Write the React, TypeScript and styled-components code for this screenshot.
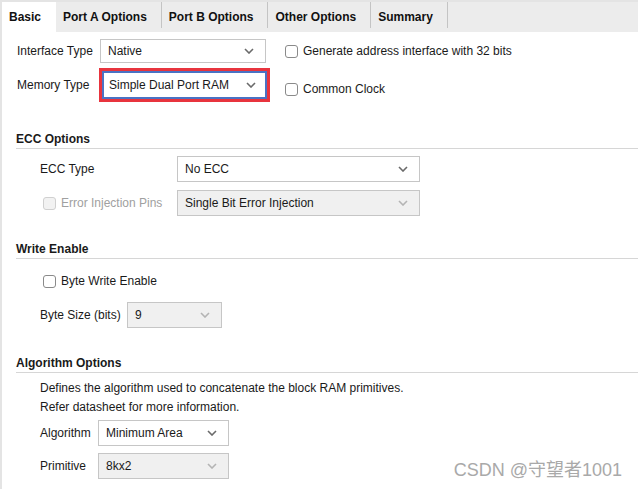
import styled, { createGlobalStyle } from "styled-components";

const GlobalStyle = createGlobalStyle`
  body {
    margin: 0;
    background: #ffffff;
    font-family: "Liberation Sans", Arial, sans-serif;
    font-size: 12px;
    color: #1a1a1a;
  }
`;

const Page = styled.div`
  position: relative;
  width: 638px;
  height: 489px;
  box-sizing: border-box;
  border-left: 2px solid #e4e4e4;
  overflow: hidden;
  background: #ffffff;
`;

const TabBar = styled.div`
  display: flex;
  height: 32px;
  box-sizing: border-box;
  border-top: 2px solid #e4e4e4;
  background: #ececec;
`;

const Tab = styled.div<{ active?: boolean }>`
  position: relative;
  display: flex;
  align-items: center;
  padding: 0 15px 0 7px;
  font-weight: bold;
  font-size: 12px;
  color: #111;
  background: ${(p) => (p.active ? "#ffffff" : "transparent")};

  &::after {
    content: "";
    display: ${(p) => (p.active ? "none" : "block")};
    position: absolute;
    right: 0;
    top: 0;
    bottom: 4px;
    width: 1px;
    background: #c4c4c4;
  }
`;

const Content = styled.div`
  display: flex;
  flex-direction: column;
  padding: 6px 0 0 15px;
`;

const TopGrid = styled.div`
  display: grid;
  grid-template-columns: 83px 185px auto;
  row-gap: 4px;
  align-items: center;
`;

const Label = styled.span<{ disabled?: boolean }>`
  color: ${(p) => (p.disabled ? "#a0a0a0" : "#1a1a1a")};
  white-space: nowrap;
`;

const SelectBox = styled.div<{ width: number; height?: number; disabled?: boolean }>`
  display: flex;
  align-items: center;
  justify-content: space-between;
  box-sizing: border-box;
  width: ${(p) => p.width}px;
  height: ${(p) => p.height ?? 26}px;
  padding: 0 11px 0 7px;
  border: 1px solid #c6c6c6;
  background: ${(p) => (p.disabled ? "#f0f0f0" : "#ffffff")};
  color: #1a1a1a;
`;

const Highlight = styled.div`
  box-sizing: border-box;
  width: 171px;
  height: 34px;
  margin-left: -1px;
  border: 3px solid #e8343e;

  & > div {
    width: 100%;
    height: 100%;
    border: 2px solid #4a72c4;
    padding-left: 5px;
    padding-right: 9px;
  }
`;

const CheckRow = styled.label<{ disabled?: boolean; indent?: number; drop?: number }>`
  display: flex;
  align-items: center;
  gap: 5px;
  height: 26px;
  margin-left: ${(p) => p.indent ?? 0}px;
  margin-top: ${(p) => p.drop ?? 0}px;
  color: ${(p) => (p.disabled ? "#a0a0a0" : "#1a1a1a")};
`;

const Box = styled.span<{ disabled?: boolean }>`
  width: 13px;
  height: 13px;
  box-sizing: border-box;
  border: 1px solid ${(p) => (p.disabled ? "#d0d0d0" : "#8a8a8a")};
  border-radius: 3px;
  background: ${(p) => (p.disabled ? "#f2f2f2" : "#ffffff")};
`;

const Section = styled.div<{ top: number }>`
  display: flex;
  flex-direction: column;
  margin-top: ${(p) => p.top}px;
`;

const SectionTitle = styled.div`
  font-weight: bold;
  line-height: 16px;
  margin-left: -1px;
  padding-bottom: 1px;
  border-bottom: 1px solid #d6d6d6;
`;

const SectionBody = styled.div<{ top: number; gap?: number }>`
  display: flex;
  flex-direction: column;
  gap: ${(p) => p.gap ?? 8}px;
  padding-left: 23px;
  margin-top: ${(p) => p.top}px;
`;

const FieldRow = styled.div<{ labelWidth: number }>`
  display: grid;
  grid-template-columns: ${(p) => p.labelWidth}px auto;
  align-items: center;
  justify-content: start;
`;

const Note = styled.div`
  line-height: 19px;
  margin-bottom: -4px;
`;

const Watermark = styled.div`
  position: absolute;
  right: 16px;
  bottom: 8px;
  font-family: "Liberation Sans", "Noto Sans CJK SC", sans-serif;
  font-size: 18px;
  color: #a9a9a9;
`;

const Chevron = ({ disabled }: { disabled?: boolean }) => (
  <svg width="10" height="6" viewBox="0 0 10 6">
    <polyline
      points="1,1 5,5 9,1"
      fill="none"
      stroke={disabled ? "#b4b4b4" : "#6a6a6a"}
      strokeWidth="1.6"
    />
  </svg>
);

const Select = ({
  value,
  width,
  height,
  disabled,
}: {
  value: string;
  width: number;
  height?: number;
  disabled?: boolean;
}) => (
  <SelectBox width={width} height={height} disabled={disabled}>
    <span>{value}</span>
    <Chevron disabled={disabled} />
  </SelectBox>
);

const Check = ({
  label,
  disabled,
  indent,
  drop,
}: {
  label: string;
  disabled?: boolean;
  indent?: number;
  drop?: number;
}) => (
  <CheckRow disabled={disabled} indent={indent} drop={drop}>
    <Box disabled={disabled} />
    {label}
  </CheckRow>
);

export default function App() {
  return (
    <Page>
      <GlobalStyle />
      <TabBar>
        <Tab active>Basic</Tab>
        <Tab>Port A Options</Tab>
        <Tab>Port B Options</Tab>
        <Tab>Other Options</Tab>
        <Tab>Summary</Tab>
      </TabBar>
      <Content>
        <TopGrid>
          <Label>Interface Type</Label>
          <Select value="Native" width={166} height={24} />
          <Check label="Generate address interface with 32 bits" />
          <Label>Memory Type</Label>
          <Highlight>
            <Select value="Simple Dual Port RAM" width={165} />
          </Highlight>
          <Check label="Common Clock" drop={8} />
        </TopGrid>

        <Section top={29}>
          <SectionTitle>ECC Options</SectionTitle>
          <SectionBody top={7}>
            <FieldRow labelWidth={137}>
              <Label>ECC Type</Label>
              <Select value="No ECC" width={243} />
            </FieldRow>
            <FieldRow labelWidth={137}>
              <Check label="Error Injection Pins" disabled indent={3} />
              <Select value="Single Bit Error Injection" width={243} disabled />
            </FieldRow>
          </SectionBody>
        </Section>

        <Section top={25}>
          <SectionTitle>Write Enable</SectionTitle>
          <SectionBody top={9}>
            <Check label="Byte Write Enable" indent={3} />
            <FieldRow labelWidth={87}>
              <Label>Byte Size (bits)</Label>
              <Select value="9" width={95} disabled />
            </FieldRow>
          </SectionBody>
        </Section>

        <Section top={27}>
          <SectionTitle>Algorithm Options</SectionTitle>
          <SectionBody top={6} gap={7}>
            <Note>
              Defines the algorithm used to concatenate the block RAM primitives.
              <br />
              Refer datasheet for more information.
            </Note>
            <FieldRow labelWidth={58}>
              <Label>Algorithm</Label>
              <Select value="Minimum Area" width={131} />
            </FieldRow>
            <FieldRow labelWidth={58}>
              <Label>Primitive</Label>
              <Select value="8kx2" width={131} disabled />
            </FieldRow>
          </SectionBody>
        </Section>
      </Content>
      <Watermark>CSDN @守望者1001</Watermark>
    </Page>
  );
}
